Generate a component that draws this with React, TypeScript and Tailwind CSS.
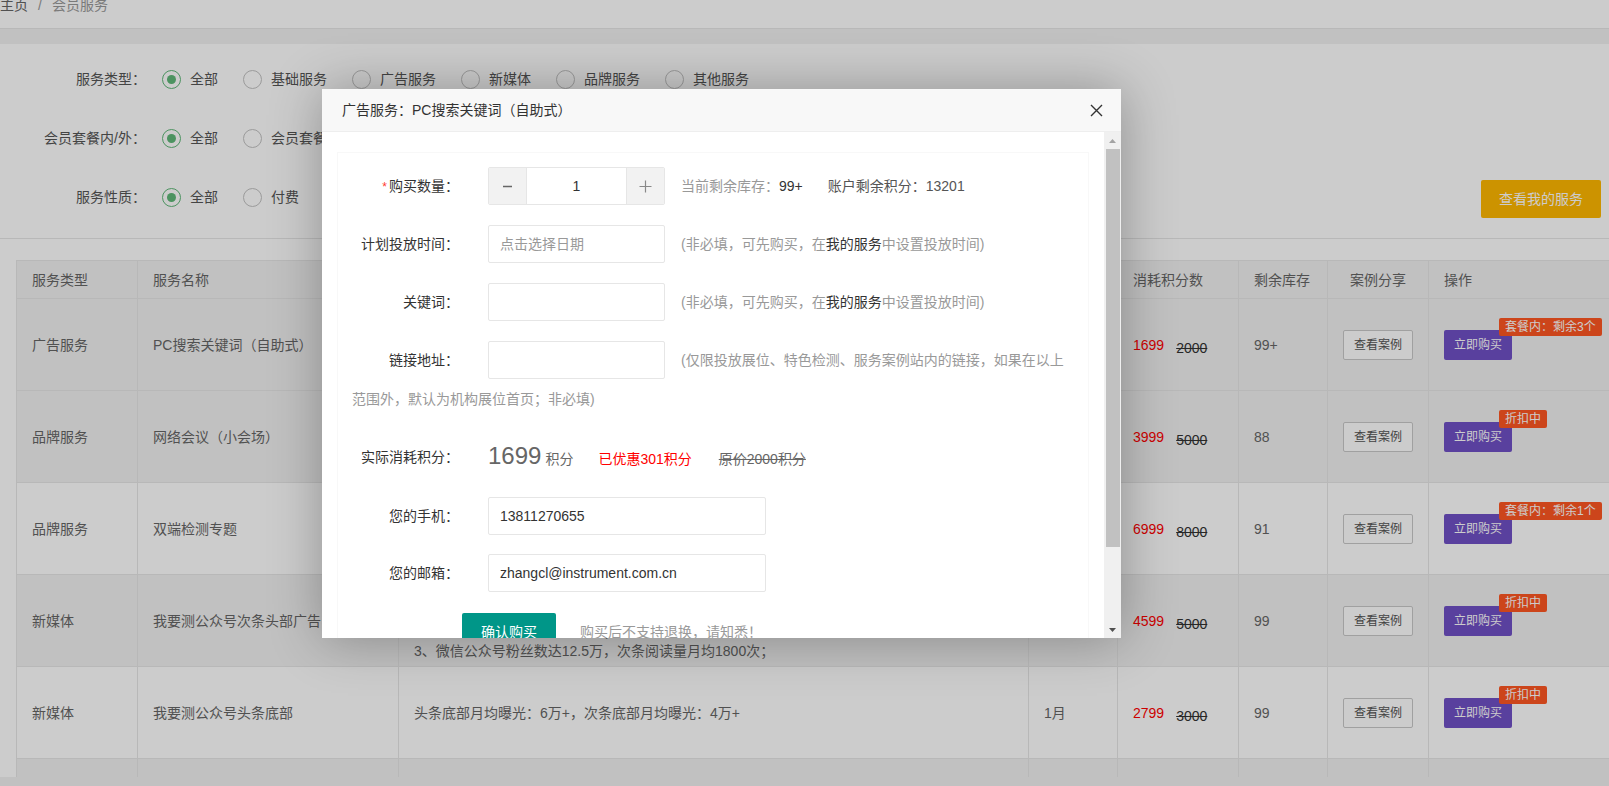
import React from "react";

type Row = {
  type: string;
  name: string;
  content: string[];
  period: string;
  price: number;
  orig: number;
  stock: string;
  badge: string;
  bg: string;
};

const ROWS: Row[] = [
  {
    type: "广告服务",
    name: "PC搜索关键词（自助式）",
    content: ["PC端搜索结果页关键词推广，自助设置投放时间"],
    period: "1月",
    price: 1699,
    orig: 2000,
    stock: "99+",
    badge: "套餐内：剩余3个",
    bg: "bg-[#f2f2f2]",
  },
  {
    type: "品牌服务",
    name: "网络会议（小会场）",
    content: ["线上网络会议，小会场直播服务"],
    period: "1次",
    price: 3999,
    orig: 5000,
    stock: "88",
    badge: "折扣中",
    bg: "bg-[#f2f2f2]",
  },
  {
    type: "品牌服务",
    name: "双端检测专题",
    content: ["PC端与移动端检测专题页面展示"],
    period: "1月",
    price: 6999,
    orig: 8000,
    stock: "91",
    badge: "套餐内：剩余1个",
    bg: "bg-white",
  },
  {
    type: "新媒体",
    name: "我要测公众号次条头部广告",
    content: [
      "我要测公众号次条头部广告位：",
      "1、广告位于次条文章头部；",
      "2、图文形式展示，可附带链接；",
      "3、微信公众号粉丝数达12.5万，次条阅读量月均1800次；",
    ],
    period: "1次",
    price: 4599,
    orig: 5000,
    stock: "99",
    badge: "折扣中",
    bg: "bg-[#f2f2f2]",
  },
  {
    type: "新媒体",
    name: "我要测公众号头条底部",
    content: ["头条底部月均曝光：6万+，次条底部月均曝光：4万+"],
    period: "1月",
    price: 2799,
    orig: 3000,
    stock: "99",
    badge: "折扣中",
    bg: "bg-white",
  },
  {
    type: "其他服务",
    name: "网站首页通栏广告",
    content: ["网站首页通栏图片广告"],
    period: "1月",
    price: 5999,
    orig: 6000,
    stock: "99",
    badge: "折扣中",
    bg: "bg-[#f2f2f2]",
  },
];

function Radio({ label, checked }: { label: string; checked?: boolean }) {
  return (
    <div className="mr-[25px] flex items-center">
      <span
        className={`flex h-[19px] w-[19px] items-center justify-center rounded-full border-[1.5px] ${
          checked ? "border-[#5fb878]" : "border-[#c2c2c2]"
        }`}
      >
        {checked && <span className="h-[9px] w-[9px] rounded-full bg-[#5fb878]" />}
      </span>
      <span className="ml-[9px] text-[#555]">{label}</span>
    </div>
  );
}

function FilterRow({
  label,
  options,
  children,
}: {
  label: string;
  options: string[];
  children?: React.ReactNode;
}) {
  return (
    <div className="flex h-[38px] items-center">
      <span className="w-[146px] text-right text-[#555]">{label}</span>
      <div className="ml-[16px] flex items-center">
        {options.map((o, i) => (
          <Radio key={o} label={o} checked={i === 0} />
        ))}
      </div>
      {children}
    </div>
  );
}

const cell = "flex items-center border-r border-b border-[#e6e6e6] px-[15px] text-[#666]";

function ServiceTable() {
  return (
    <div className="grid w-max grid-cols-[121px_261px_630px_89px_121px_89px_101px_190px] border-t border-l border-[#e6e6e6] leading-[20px]">
      {/* header */}
      {["服务类型", "服务名称", "服务内容", "服务周期", "消耗积分数", "剩余库存"].map((h) => (
        <div key={h} className={`${cell} h-[38px] bg-[#f2f2f2]`}>
          {h}
        </div>
      ))}
      <div className={`${cell} h-[38px] justify-center bg-[#f2f2f2]`}>案例分享</div>
      <div className={`${cell} h-[38px] bg-[#f2f2f2]`}>操作</div>

      {ROWS.map((r) => (
        <React.Fragment key={r.name}>
          <div className={`${cell} h-[92px] ${r.bg}`}>{r.type}</div>
          <div className={`${cell} h-[92px] ${r.bg}`}>{r.name}</div>
          <div className={`${cell} h-[92px] flex-col !items-start justify-center ${r.bg}`}>
            {r.content.map((c) => (
              <span key={c}>{c}</span>
            ))}
          </div>
          <div className={`${cell} h-[92px] ${r.bg}`}>{r.period}</div>
          <div className={`${cell} h-[92px] ${r.bg}`}>
            <span className="text-[#ff0000]">{r.price}</span>
            <span className="ml-[12px] translate-y-[3px] text-[#333] line-through">{r.orig}</span>
          </div>
          <div className={`${cell} h-[92px] ${r.bg}`}>{r.stock}</div>
          <div className={`${cell} h-[92px] justify-center ${r.bg}`}>
            <button className="h-[30px] w-[70px] rounded-[2px] border border-[#c9c9c9] bg-white text-[12px] text-[#555]">
              查看案例
            </button>
          </div>
          <div className={`${cell} h-[92px] ${r.bg}`}>
            <div className="relative">
              <button className="h-[30px] w-[68px] rounded-[2px] bg-[#7050c6] text-[12px] text-white">
                立即购买
              </button>
              <span className="absolute top-[-12px] left-[55px] h-[18px] whitespace-nowrap rounded-[2px] bg-[#ff5722] px-[6px] text-[12px] leading-[18px] text-white">
                {r.badge}
              </span>
            </div>
          </div>
        </React.Fragment>
      ))}
    </div>
  );
}

function Label({ children, required }: { children: React.ReactNode; required?: boolean }) {
  return (
    <span className="w-[107px] shrink-0 text-right text-[#333]">
      {required && <span className="mr-[2px] text-[12px] text-[#ff3b30]">*</span>}
      {children}
    </span>
  );
}

function Input({ value, placeholder, wide }: { value?: string; placeholder?: string; wide?: boolean }) {
  return (
    <div
      className={`ml-[29px] flex h-[38px] shrink-0 items-center rounded-[2px] border border-[#e6e6e6] pl-[11px] ${
        wide ? "w-[278px]" : "w-[177px]"
      }`}
    >
      {value ? <span className="text-[#333]">{value}</span> : <span className="text-[#999]">{placeholder}</span>}
    </div>
  );
}

function OptionalHint() {
  return (
    <span className="ml-[16px] text-[#999]">
      (非必填，可先购买，在<span className="text-[#333]">我的服务</span>中设置投放时间)
    </span>
  );
}

function PurchaseModal() {
  return (
    <div className="absolute top-[89px] left-[322px] z-20 flex h-[549px] w-[799px] flex-col bg-white shadow-[1px_1px_50px_rgba(0,0,0,0.3)]">
      <div className="flex h-[43px] shrink-0 items-center justify-between border-b border-[#eee] bg-[#f8f8f8] pr-[18px] pl-[20px] text-[#333]">
        <span>广告服务：PC搜索关键词（自助式）</span>
        <svg width="13" height="13" viewBox="0 0 13 13">
          <path d="M1 1L12 12M12 1L1 12" stroke="#333" strokeWidth="1.4" />
        </svg>
      </div>
      <div className="flex min-h-0 flex-1">
        <div className="min-w-0 flex-1 overflow-hidden px-[15px] pt-[20px]">
          <div className="h-[600px] border border-[#f8f8f8] pt-[14px] pl-[14px]">
            {/* quantity */}
            <div className="flex h-[38px] items-center">
              <Label required>购买数量：</Label>
              <div className="ml-[29px] flex h-[38px] w-[177px] overflow-hidden rounded-[2px] border border-[#e6e6e6]">
                <span className="flex w-[38px] items-center justify-center border-r border-[#e6e6e6] bg-[#f2f2f2]">
                  <svg width="11" height="11" viewBox="0 0 11 11">
                    <path d="M1 5.5H10" stroke="#666" strokeWidth="1.5" />
                  </svg>
                </span>
                <span className="flex flex-1 items-center justify-center text-[#333]">1</span>
                <span className="flex w-[38px] items-center justify-center border-l border-[#e6e6e6] bg-[#f2f2f2]">
                  <svg width="13" height="13" viewBox="0 0 13 13">
                    <path d="M0.5 6.5H12.5M6.5 0.5V12.5" stroke="#888" strokeWidth="1.2" />
                  </svg>
                </span>
              </div>
              <span className="ml-[16px] text-[#999]">
                当前剩余库存：<span className="text-[#333]">99+</span>
              </span>
              <span className="ml-[25px] text-[#555]">账户剩余积分：13201</span>
            </div>

            {/* date */}
            <div className="mt-[20px] flex h-[38px] items-center">
              <Label>计划投放时间：</Label>
              <Input placeholder="点击选择日期" />
              <OptionalHint />
            </div>

            {/* keyword */}
            <div className="mt-[20px] flex h-[38px] items-center">
              <Label>关键词：</Label>
              <Input />
              <OptionalHint />
            </div>

            {/* link */}
            <div className="mt-[20px] flex h-[38px] items-center">
              <Label>链接地址：</Label>
              <Input />
              <span className="ml-[16px] whitespace-nowrap text-[#999]">
                (仅限投放展位、特色检测、服务案例站内的链接，如果在以上
              </span>
            </div>
            <div className="mt-[10px] leading-[20px] text-[#999]">范围外，默认为机构展位首页；非必填)</div>

            {/* cost */}
            <div className="mt-[29px] flex h-[38px] items-center">
              <Label>实际消耗积分：</Label>
              <div className="ml-[29px] flex items-baseline">
                <span className="text-[24px] leading-none text-[#666]">1699</span>
                <span className="ml-[4px] text-[#666]">积分</span>
                <span className="ml-[25px] text-[#ff0000]">已优惠301积分</span>
                <span className="ml-[27px] text-[#666] line-through">原价2000积分</span>
              </div>
            </div>

            {/* phone */}
            <div className="mt-[21px] flex h-[38px] items-center">
              <Label>您的手机：</Label>
              <Input value="13811270655" wide />
            </div>

            {/* email */}
            <div className="mt-[19px] flex h-[38px] items-center">
              <Label>您的邮箱：</Label>
              <Input value="zhangcl@instrument.com.cn" wide />
            </div>

            {/* submit */}
            <div className="mt-[21px] flex h-[38px] items-center pl-[110px]">
              <button className="h-[38px] w-[94px] rounded-[2px] bg-[#009688] text-white">确认购买</button>
              <span className="ml-[24px] text-[#999]">购买后不支持退换，请知悉！</span>
            </div>
          </div>
        </div>

        {/* scrollbar */}
        <div className="flex w-[17px] shrink-0 flex-col bg-[#f0f0f0]">
          <div className="flex h-[17px] items-center justify-center">
            <svg width="7" height="4" viewBox="0 0 7 4">
              <path d="M3.5 0L7 4H0Z" fill="#a3a3a3" />
            </svg>
          </div>
          <div className="ml-[2px] h-[398px] w-[14px] bg-[#c1c1c1]" />
          <div className="flex-1" />
          <div className="flex h-[17px] items-center justify-center">
            <svg width="7" height="4" viewBox="0 0 7 4">
              <path d="M0 0H7L3.5 4Z" fill="#505050" />
            </svg>
          </div>
        </div>
      </div>
    </div>
  );
}

export default function App() {
  return (
    <div className="relative h-[786px] w-[1609px] overflow-hidden bg-[#f2f2f2] font-['Liberation_Sans','Noto_Sans_CJK_SC',sans-serif] text-[14px]">
      {/* breadcrumb bar (page scrolled slightly) */}
      <div className="flex h-[29px] items-start border-b border-[#e6e6e6] bg-white">
        <div className="-mt-[5px] flex items-center leading-[20px]">
          <span className="text-[#666]">主页</span>
          <span className="mx-[10px] text-[#999]">/</span>
          <span className="text-[#999]">会员服务</span>
        </div>
      </div>

      {/* main card */}
      <div className="mt-[15px] h-[733px] overflow-hidden bg-white">
        <div className="flex flex-col gap-[21px] border-b border-[#e6e6e6] pt-[16px] pb-[22px]">
          <FilterRow
            label="服务类型："
            options={["全部", "基础服务", "广告服务", "新媒体", "品牌服务", "其他服务"]}
          />
          <FilterRow label="会员套餐内/外：" options={["全部", "会员套餐内", "会员套餐外"]} />
          <FilterRow label="服务性质：" options={["全部", "付费", "免费"]}>
            <button className="mt-[4px] mr-[8px] ml-auto h-[38px] w-[120px] rounded-[2px] bg-[#ffb800] text-white">
              查看我的服务
            </button>
          </FilterRow>
        </div>
        <div className="pt-[21px] pl-[16px]">
          <ServiceTable />
        </div>
      </div>

      {/* layer shade */}
      <div className="absolute inset-0 z-10 bg-black/20" />

      <PurchaseModal />
    </div>
  );
}
